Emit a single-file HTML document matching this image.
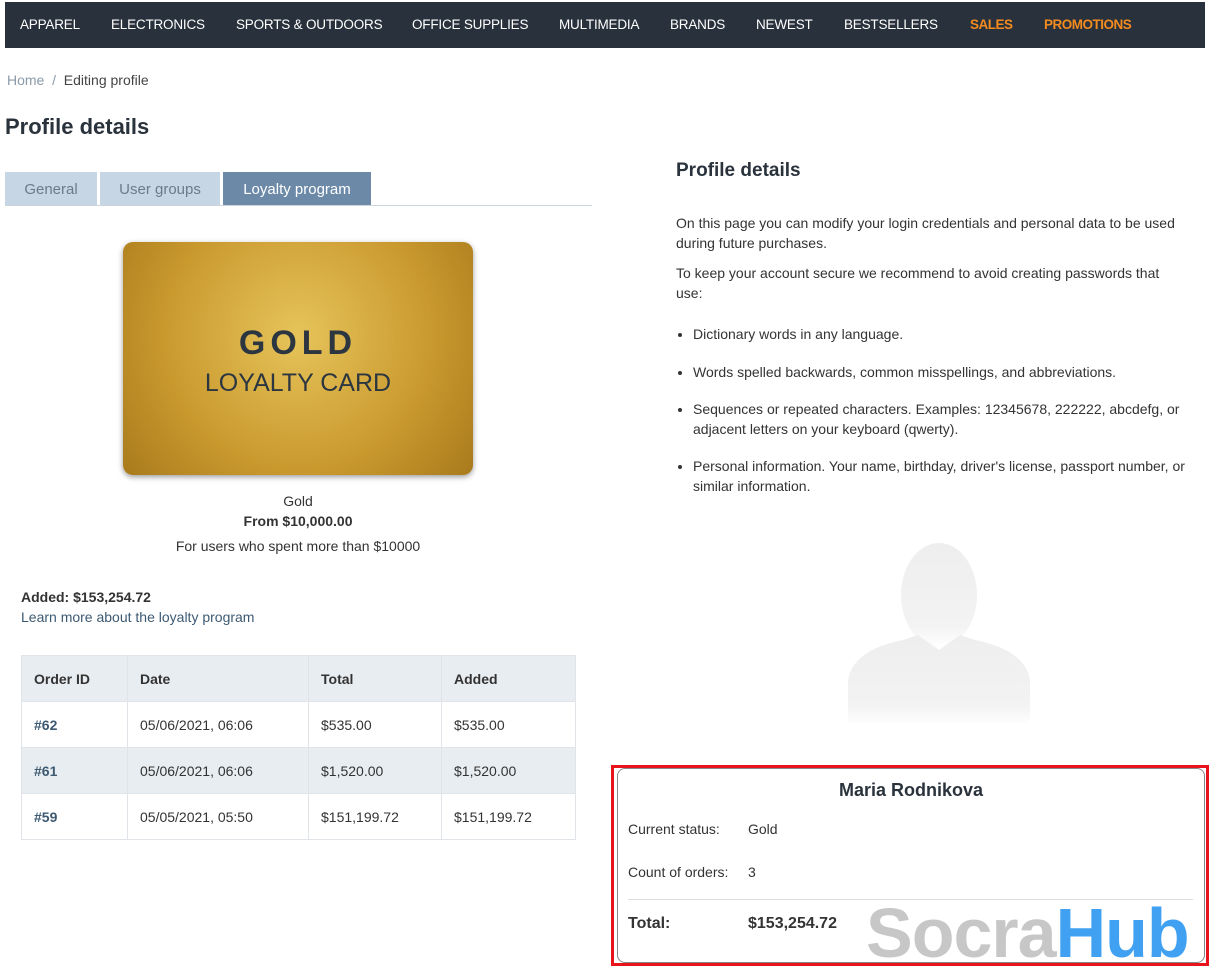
<!DOCTYPE html>
<html><head><style>
*{box-sizing:border-box;margin:0;padding:0}
body{width:1212px;height:974px;background:#fff;font-family:"Liberation Sans",sans-serif;color:#333;font-size:14px;position:relative;overflow:hidden}
.nav{position:absolute;left:5px;top:2px;width:1200px;height:46px;background:#28313c}
.nav span{position:absolute;top:15px;color:#fff;font-size:13.5px;white-space:nowrap;letter-spacing:-0.2px}
.nav .o{color:#f48b1f;font-weight:bold;letter-spacing:-0.5px}
.a{position:absolute}
.tab{position:absolute;top:172px;height:33px;background:#c6d6e4;color:#6c7b88;font-size:15px;text-align:center;line-height:35px}
td,th{border:1px solid #e0e4e8;padding:0 12px;text-align:left;height:46px;font-size:14px}
th{background:#e8edf1}
table{border-collapse:collapse}
li{margin-bottom:18px;margin-left:17px}
</style></head><body>
<div class="nav"><span style="left:15px">APPAREL</span><span style="left:106px">ELECTRONICS</span><span style="left:231px">SPORTS &amp; OUTDOORS</span><span style="left:407px">OFFICE SUPPLIES</span><span style="left:554px">MULTIMEDIA</span><span style="left:665px">BRANDS</span><span style="left:751px">NEWEST</span><span style="left:839px">BESTSELLERS</span><span class="o" style="left:965px">SALES</span><span class="o" style="left:1039px">PROMOTIONS</span></div>
<div class="a" style="left:7px;top:72px;font-size:14px;color:#8a9aa8">Home &nbsp;/&nbsp; <span style="color:#444">Editing profile</span></div>
<div class="a" style="left:5px;top:114px;font-size:22px;font-weight:bold;color:#2a333c">Profile details</div>
<div class="tab" style="left:5px;width:92px">General</div>
<div class="tab" style="left:100px;width:120px">User groups</div>
<div class="tab" style="left:223px;width:148px;background:#6c8aa8;color:#fff">Loyalty program</div>
<div class="a" style="left:5px;top:205px;width:587px;height:1px;background:#cdd5dc"></div>
<div class="a" style="left:123px;top:242px;width:350px;height:233px;border-radius:10px;background:radial-gradient(circle at 50% 40%,#e6c45a,#c9992e 60%,#a87a1c);box-shadow:0 2px 6px rgba(0,0,0,.4);text-align:center">
<div style="margin-top:82px;font-size:34px;font-weight:bold;letter-spacing:5px;color:#2c3640">GOLD</div>
<div style="font-size:25px;color:#2c3640;margin-top:6px">LOYALTY CARD</div></div>
<div class="a" style="left:0;width:596px;top:491px;text-align:center;line-height:20px">Gold<br><b>From $10,000.00</b><br><span style="line-height:30px">For users who spent more than $10000</span></div>
<div class="a" style="left:21px;top:587px;line-height:20px"><b>Added: $153,254.72</b><br><span style="color:#3d5a73">Learn more about the loyalty program</span></div>
<table class="a" style="left:21px;top:655px;width:555px">
<tr><th style="width:106px">Order ID</th><th style="width:181px">Date</th><th style="width:133px">Total</th><th>Added</th></tr>
<tr><td style="font-weight:bold;color:#3d5a73">#62</td><td>05/06/2021, 06:06</td><td>$535.00</td><td>$535.00</td></tr>
<tr style="background:#e8edf1"><td style="font-weight:bold;color:#3d5a73">#61</td><td>05/06/2021, 06:06</td><td>$1,520.00</td><td>$1,520.00</td></tr>
<tr><td style="font-weight:bold;color:#3d5a73">#59</td><td>05/05/2021, 05:50</td><td>$151,199.72</td><td>$151,199.72</td></tr>
</table>
<div class="a" style="left:676px;top:160px;font-size:19px;font-weight:bold;color:#2a333c">Profile details</div>
<div class="a" style="left:676px;top:214px;width:510px;line-height:19.5px;font-size:14px">
<p>On this page you can modify your login credentials and personal data to be used during future purchases.</p>
<p style="margin-top:11px">To keep your account secure we recommend to avoid creating passwords that use:</p>
<ul style="margin-top:22px">
<li>Dictionary words in any language.</li>
<li>Words spelled backwards, common misspellings, and abbreviations.</li>
<li>Sequences or repeated characters. Examples: 12345678, 222222, abcdefg, or adjacent letters on your keyboard (qwerty).</li>
<li>Personal information. Your name, birthday, driver's license, passport number, or similar information.</li></ul></div>
<svg class="a" style="left:848px;top:540px" width="182" height="185"><defs><linearGradient id="g" x1="0" y1="0" x2="0" y2="1"><stop offset="0" stop-color="#eee"/><stop offset=".8" stop-color="#f3f3f3"/><stop offset="1" stop-color="#fff"/></linearGradient></defs>
<ellipse cx="91" cy="55" rx="38" ry="52" fill="url(#g)"/><path d="M0 185V140Q5 110 55 100L70 95 91 110 112 95 127 100Q177 110 182 140V185Z" fill="url(#g)"/></svg>
<div class="a" style="left:611px;top:765px;width:598px;height:201px;border:3px solid #e8141c"></div>
<div class="a" style="left:617px;top:768px;width:588px;height:195px;border:1px solid #888;border-radius:8px"></div>
<div class="a" style="left:617px;top:780px;width:588px;text-align:center;font-size:18px;font-weight:bold;color:#2a333c">Maria Rodnikova</div>
<div class="a" style="left:628px;top:821px">Current status:</div><div class="a" style="left:748px;top:821px">Gold</div>
<div class="a" style="left:628px;top:864px">Count of orders:</div><div class="a" style="left:748px;top:864px">3</div>
<div class="a" style="left:628px;top:899px;width:565px;height:1px;background:#ddd"></div>
<div class="a" style="left:628px;top:915px;font-size:16px;font-weight:bold">Total:</div><div class="a" style="left:748px;top:915px;font-size:16px;font-weight:bold">$153,254.72</div>
<div class="a" style="left:866px;top:893px;font-size:70px;font-weight:bold;letter-spacing:-1px;line-height:80px"><span style="color:rgba(180,180,180,.75)">Socra</span><span style="color:rgba(30,145,240,.85)">Hub</span></div>
</body></html>
